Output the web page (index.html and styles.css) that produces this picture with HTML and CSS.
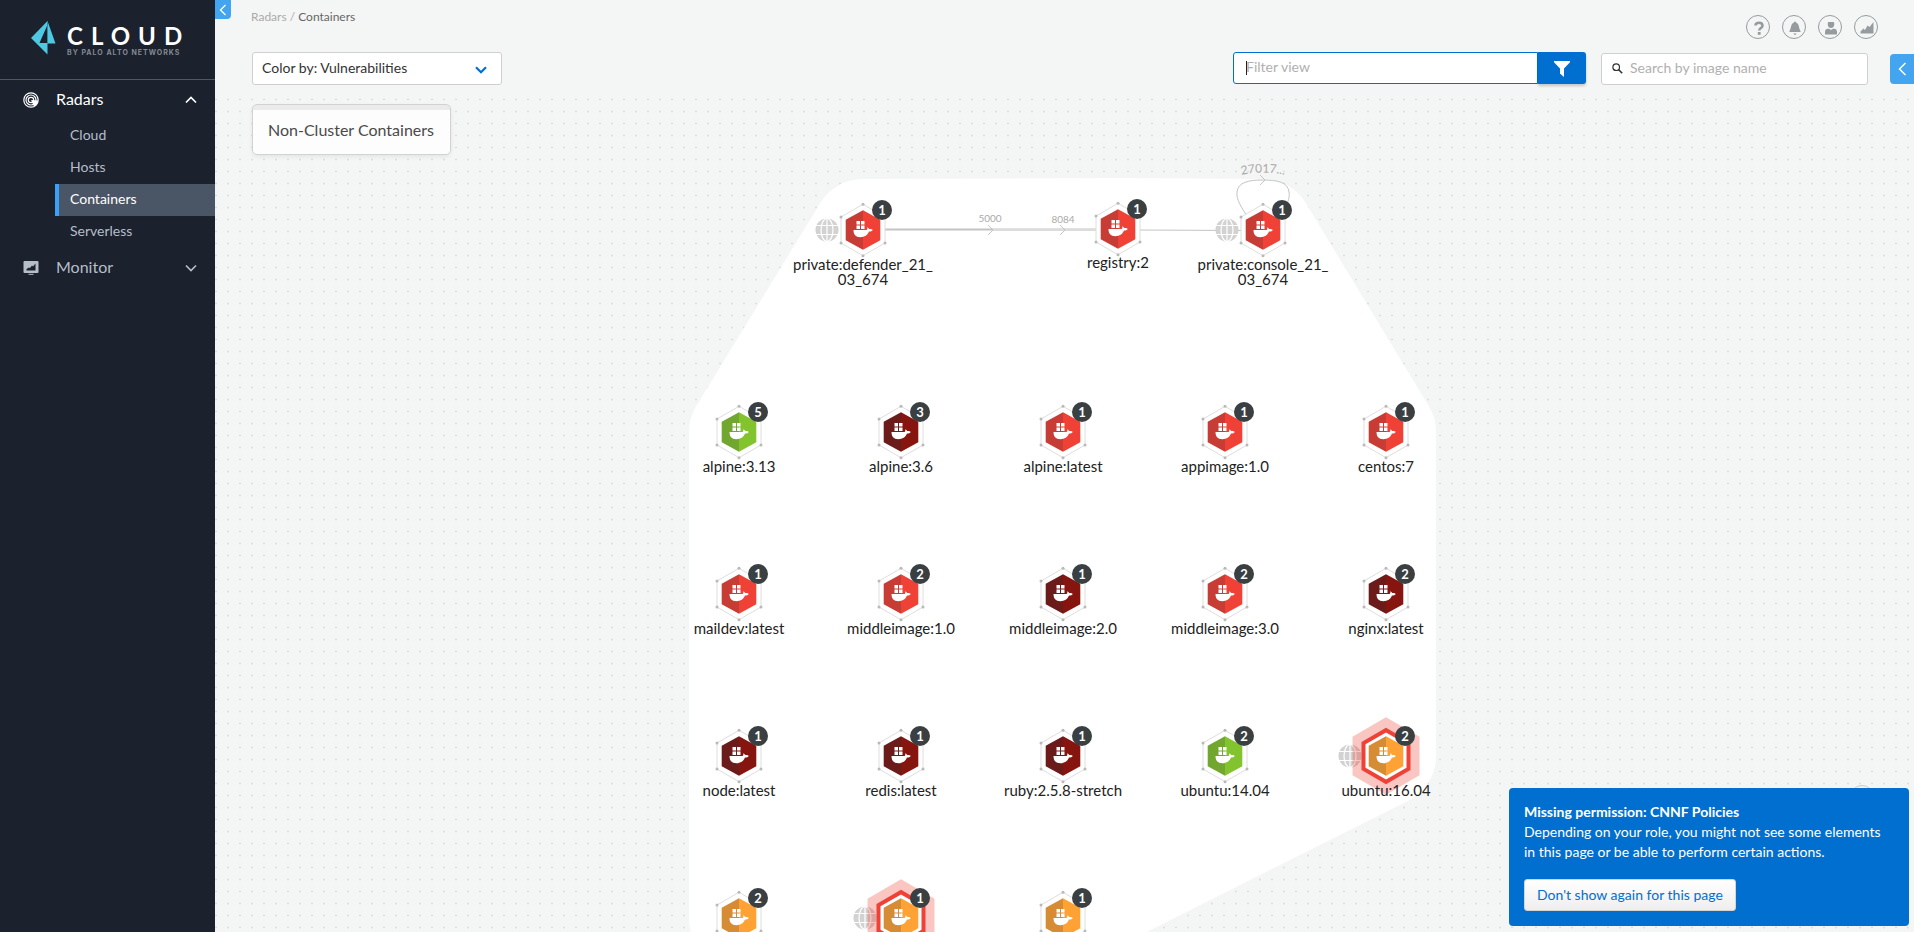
FILE: index.html
```html
<!DOCTYPE html>
<html lang="en">
<head>
<meta charset="utf-8">
<title>Radars / Containers</title>
<link rel="stylesheet" href="styles.css">
</head>
<body>
<div class="app">
  <aside class="sidebar">
    <div class="brand">
      <svg class="brand-mark" width="26" height="34" viewBox="0 0 26 34" aria-hidden="true">
        <path d="M16.500 0V33.500L0 17Z" fill="#4fc8e2"/>
        <path d="M16.500 0L24.500 22.500H8.500Z" fill="#4fc8e2"/>
        <path d="M16 5V22H8.500Z" fill="#1b212d"/>
        <path d="M16.500 0V22.500" stroke="#2e8ba3" stroke-width="1"/>
      </svg>
      <div class="brand-text">
        <span class="brand-name">CLOUD</span>
        <span class="brand-by">BY PALO ALTO NETWORKS</span>
      </div>
    </div>
    <nav class="nav">
      <button class="nav-group active" type="button" aria-expanded="true">
        <svg width="16" height="16" viewBox="0 0 16 16" fill="none" stroke="#fff" aria-hidden="true">
          <circle cx="8" cy="8" r="7.200" stroke-width="1.200"/>
          <circle cx="8" cy="8" r="5" stroke-width="1.200"/>
          <circle cx="8" cy="8" r="2.700" stroke-width="1.200"/>
          <path d="M8 8L15 8.500A7 7 0 0 1 11 14.500Z" fill="#fff" stroke="none"/>
        </svg>
        <span class="nav-label">Radars</span>
        <svg width="12" height="8" viewBox="0 0 12 8" fill="none" stroke="currentColor" stroke-width="1.700" aria-hidden="true"><path d="M1 6.500L6 1.500L11 6.500"/></svg>
      </button>
      <ul class="subnav">
        <li><a href="#cloud">Cloud</a></li>
        <li><a href="#hosts">Hosts</a></li>
        <li><a class="current" href="#containers" aria-current="page">Containers</a></li>
        <li><a href="#serverless">Serverless</a></li>
      </ul>
      <button class="nav-group" type="button" aria-expanded="false">
        <svg width="16" height="14" viewBox="0 0 16 14" aria-hidden="true">
          <path d="M1.500 0H14.500Q15.500 0 15.500 1V11Q15.500 12 14.500 12H1.500Q.5 12 .5 11V1Q.5 0 1.500 0Z" fill="#b5bec9"/>
          <path d="M3.500 9.500V8L6 6.500L7 7L9 4.500L10 5.500L12.500 2.500V9.500Z" fill="#1b212d"/>
          <path d="M5.500 13.300H10.500" stroke="#b5bec9" stroke-width="1"/>
        </svg>
        <span class="nav-label">Monitor</span>
        <svg width="12" height="8" viewBox="0 0 12 8" fill="none" stroke="currentColor" stroke-width="1.700" aria-hidden="true"><path d="M1 1.500L6 6.500L11 1.500"/></svg>
      </button>
    </nav>
  </aside>

  <main class="main">
    <svg class="radar" role="img" aria-label="Container radar">
      <defs>
        <pattern id="dots" width="12" height="12" patternUnits="userSpaceOnUse">
          <circle cx="1" cy="3.500" r="1" fill="#dcdedd"/>
        </pattern>
        <g id="globe">
          <circle r="11.500" fill="#d2d2d2"/>
          <g fill="none" stroke="#fff" stroke-width="1.200">
            <path d="M0 -12V12M-12 -4.500H12M-12 4.500H12"/>
            <ellipse rx="6" ry="11.500"/>
          </g>
        </g>
        <g id="hex">
          <path d="M0 -19.700L-17.300 -10.300V10.300L0 19.700Z" fill="var(--shade)"/>
          <path d="M0 -19.700L17.300 -10.300V10.300L0 19.700Z" fill="var(--tone)"/>
          <g fill="#fff">
            <path d="M-6.500 -9H-3V-5.500H-6.500ZM-2 -9H1.500V-5.500H-2ZM-6.500 -4.500H-3V-1H-6.500ZM-2 -4.500H1.500V-1H-2Z"/>
            <path d="M-9.500 0H3.600C4.300 -.5 4.500 -1.500 4.300 -2.800C5.500 -2.300 6 -1.300 6.300 -.9C7.500 -1.100 9 -.9 9.700 -.1C9 1.200 7.500 1.700 6 1.600C4.500 5.500 1.500 7.200 -2.500 7.200C-7.500 7.200 -9.500 4.500 -9.500 0Z"/>
          </g>
        </g>
        <g id="node">
          <path d="M0 -25.700L22 -13V13L0 25.700L-22 13V-13Z" fill="#fff" stroke="#dedede"/>
          <g fill="#b9b9b9">
            <circle cy="-25.700" r="1.500"/><circle cy="25.700" r="1.500"/>
            <circle cx="22" cy="-13" r="1.500"/><circle cx="22" cy="13" r="1.500"/>
            <circle cx="-22" cy="-13" r="1.500"/><circle cx="-22" cy="13" r="1.500"/>
          </g>
          <use href="#hex"/>
          <circle cx="19" cy="-20" r="10" fill="#3a3f42"/>
        </g>
        <g id="alert">
          <path d="M0 -38.700L33.500 -19.300V19.300L0 38.700L-33.500 19.300V-19.300Z" fill="#ef4136" fill-opacity=".3"/>
          <path d="M0 -28.300L24.500 -14V14L0 28.300L-24.500 14V-14Z" fill="#ef4136"/>
          <path d="M0 -23.500L20.500 -11.800V11.800L0 23.500L-20.500 11.800V-11.800Z" fill="#fff"/>
          <use href="#hex"/>
          <circle cx="19" cy="-20" r="10" fill="#3a3f42"/>
        </g>
      </defs>

      <rect y="96" width="100%" height="100%" fill="url(#dots)"/>
      <polygon class="hull" points="648,229 903,228 1048,229 1171,432 1171,756 848,918 524,918 524,432"/>

      <g class="edges">
        <path d="M666 229.500L886 229.500" stroke-width="2"/>
        <path d="M778 230H886" stroke="#dcdcdc" stroke-width="2"/>
        <path d="M920 230L1031 230.500"/>
        <path d="M1034 219C1026 207 1021 199 1022 192C1023 182 1034 180 1048 180C1062 180 1073 182 1074 192C1075 197 1073 202 1070 208"/>
        <path d="M773 225L778 230L773 235M845 225L850 230L845 235M1045 175L1050 180L1045 185"/>
      </g>
      <path id="loop-label" d="M1018 177Q1048 168 1078 177" fill="none"/>
      <text class="port" x="775" y="222">5000</text>
      <text class="port" x="848" y="223">8084</text>
      <text class="port loop"><textPath href="#loop-label" startOffset="50%">27017...</textPath></text>

      <g class="red" transform="translate(648 230)">
        <use href="#globe" x="-36"/><use href="#node"/><text class="count" x="19" y="-15">1</text>
        <text class="label" y="40">private:defender_21_</text><text class="label" y="55">03_674</text>
      </g>
      <g class="red" transform="translate(903 229)">
        <use href="#node"/><text class="count" x="19" y="-15">1</text><text class="label" y="39">registry:2</text>
      </g>
      <g class="red" transform="translate(1048 230)">
        <use href="#globe" x="-36"/><use href="#node"/><text class="count" x="19" y="-15">1</text>
        <text class="label" y="40">private:console_21_</text><text class="label" y="55">03_674</text>
      </g>

      <g class="green" transform="translate(524 432)"><use href="#node"/><text class="count" x="19" y="-15">5</text><text class="label" y="40">alpine:3.13</text></g>
      <g class="maroon" transform="translate(686 432)"><use href="#node"/><text class="count" x="19" y="-15">3</text><text class="label" y="40">alpine:3.6</text></g>
      <g class="red" transform="translate(848 432)"><use href="#node"/><text class="count" x="19" y="-15">1</text><text class="label" y="40">alpine:latest</text></g>
      <g class="red" transform="translate(1010 432)"><use href="#node"/><text class="count" x="19" y="-15">1</text><text class="label" y="40">appimage:1.0</text></g>
      <g class="red" transform="translate(1171 432)"><use href="#node"/><text class="count" x="19" y="-15">1</text><text class="label" y="40">centos:7</text></g>

      <g class="red" transform="translate(524 594)"><use href="#node"/><text class="count" x="19" y="-15">1</text><text class="label" y="40">maildev:latest</text></g>
      <g class="red" transform="translate(686 594)"><use href="#node"/><text class="count" x="19" y="-15">2</text><text class="label" y="40">middleimage:1.0</text></g>
      <g class="maroon" transform="translate(848 594)"><use href="#node"/><text class="count" x="19" y="-15">1</text><text class="label" y="40">middleimage:2.0</text></g>
      <g class="red" transform="translate(1010 594)"><use href="#node"/><text class="count" x="19" y="-15">2</text><text class="label" y="40">middleimage:3.0</text></g>
      <g class="maroon" transform="translate(1171 594)"><use href="#node"/><text class="count" x="19" y="-15">2</text><text class="label" y="40">nginx:latest</text></g>

      <g class="maroon" transform="translate(524 756)"><use href="#node"/><text class="count" x="19" y="-15">1</text><text class="label" y="40">node:latest</text></g>
      <g class="maroon" transform="translate(686 756)"><use href="#node"/><text class="count" x="19" y="-15">1</text><text class="label" y="40">redis:latest</text></g>
      <g class="maroon" transform="translate(848 756)"><use href="#node"/><text class="count" x="19" y="-15">1</text><text class="label" y="40">ruby:2.5.8-stretch</text></g>
      <g class="green" transform="translate(1010 756)"><use href="#node"/><text class="count" x="19" y="-15">2</text><text class="label" y="40">ubuntu:14.04</text></g>
      <g class="orange" transform="translate(1171 756)"><use href="#globe" x="-36"/><use href="#alert"/><text class="count" x="19" y="-15">2</text><text class="label" y="40">ubuntu:16.04</text></g>

      <g class="orange" transform="translate(524 918)"><use href="#node"/><text class="count" x="19" y="-15">2</text></g>
      <g class="orange" transform="translate(686 918)"><use href="#globe" x="-36"/><use href="#alert"/><text class="count" x="19" y="-15">1</text></g>
      <g class="orange" transform="translate(848 918)"><use href="#node"/><text class="count" x="19" y="-15">1</text></g>
    </svg>

    <button class="tab tab-left" type="button" aria-label="Collapse menu">
      <svg width="8" height="12" viewBox="0 0 8 12" fill="none" stroke="#fff" stroke-width="1.300"><path d="M6.500 1L1.500 6L6.500 11"/></svg>
    </button>

    <header class="top">
      <nav class="crumbs" aria-label="Breadcrumb"><a href="#radars">Radars</a> / <span>Containers</span></nav>
      <div class="tools">
        <button type="button" aria-label="Help"><svg width="24" height="24" viewBox="0 0 24 24"><path d="M8.500 9.500C8.500 5.800 15.500 5.800 15.500 9.700C15.500 12 12.200 12 12.200 14.500" fill="none" stroke="#969b9f" stroke-width="2.600"/><rect x="10.800" y="16" width="2.800" height="2.800" fill="#969b9f"/></svg></button>
        <button type="button" aria-label="Notifications"><svg width="24" height="24" viewBox="0 0 24 24" fill="#969b9f"><path d="M12 5.500C13 5.500 13.200 6.300 13.200 6.800C16.500 8 15.500 12 17.500 15V16H6.500V15C8.500 12 7.500 8 10.800 6.800C10.800 6.300 11 5.500 12 5.500ZM10.300 17.500H13.700L12 19.300Z"/></svg></button>
        <button type="button" aria-label="Account"><svg width="24" height="24" viewBox="0 0 24 24" fill="#969b9f"><path d="M9.500 6H14.500Q15.200 6 15.200 7V9Q14.800 12 12 12Q9.200 12 8.800 9V7Q8.800 6 9.500 6ZM6 18.500V15.500Q6.200 13 8.500 12.800L10 12.800L12 14L14 12.800L15.500 12.800Q17.800 13 18 15.500V18.500Z"/></svg></button>
        <button type="button" aria-label="Reports"><svg width="24" height="24" viewBox="0 0 24 24" fill="#969b9f"><path d="M5.500 17.500V15.500L8.500 12.500L10 14L12.500 9.500L14.500 11L18.500 6V17.500Z"/></svg></button>
      </div>
    </header>

    <div class="toolbar">
      <div class="picker">
        <select aria-label="Color by"><option>Color by: Vulnerabilities</option></select>
        <svg width="12" height="8" viewBox="0 0 12 8" fill="none" stroke="#006fcf" stroke-width="2.200" aria-hidden="true"><path d="M1 1.300L6 6.300L11 1.300"/></svg>
      </div>
      <form class="filter" role="search">
        <input type="text" placeholder="Filter view" aria-label="Filter view">
        <span class="caret"></span>
        <button type="submit" aria-label="Apply filter"><svg width="16" height="16" viewBox="0 0 16 16" fill="#fff"><path d="M0 0H16V1.200L10 7.500V16L6 12.500V7.500L0 1.200Z"/></svg></button>
      </form>
      <label class="search">
        <svg width="11" height="11" viewBox="0 0 11 11" fill="none" stroke="#333" aria-hidden="true"><circle cx="4.200" cy="4.200" r="3.300" stroke-width="1.200"/><path d="M6.600 6.600L10.200 10.200" stroke-width="1.500"/></svg>
        <input type="text" placeholder="Search by image name" aria-label="Search by image name">
      </label>
      <button class="tab tab-right" type="button" aria-label="Open panel">
        <svg width="9" height="14" viewBox="0 0 9 14" fill="none" stroke="#fff" stroke-width="1.500"><path d="M7.500 1L1.500 7L7.500 13"/></svg>
      </button>
    </div>

    <button class="cluster" type="button">Non-Cluster Containers</button>

    <span class="locator"></span>
    <section class="toast" role="alert">
      <strong>Missing permission: CNNF Policies</strong>
      <p>Depending on your role, you might not see some elements in this page or be able to perform certain actions.</p>
      <button type="button">Don't show again for this page</button>
    </section>
  </main>
</div>
</body>
</html>
```

FILE: styles.css
```css
* { box-sizing: border-box; }

body {
  margin: 0;
  font-family: Lato, "Open Sans", sans-serif;
  font-size: 15px;
  color: #333;
  background: #f4f6f5;
}

button, input, select { font: inherit; }
button { border: 0; padding: 0; cursor: pointer; }
a { color: inherit; text-decoration: none; }

.app {
  display: grid;
  grid-template-columns: 215px 1fr;
  height: 100vh;
  overflow: hidden;
}

/* Sidebar */
.sidebar { background: #1b212d; color: #b5bec9; }

.brand {
  display: flex;
  align-items: flex-start;
  gap: 10px;
  height: 80px;
  padding: 21px 24px 0 31px;
  border-bottom: 1px solid #4d5866;
}
.brand-text { display: flex; flex-direction: column; padding-top: 3px; }
.brand-name {
  font: 700 24px/24px Lato, sans-serif;
  letter-spacing: 8px;
  color: #fff;
}
.brand-by {
  font: 700 7px/10px Inter, sans-serif;
  letter-spacing: 1px;
  color: #858a92;
  white-space: nowrap;
}

.nav-group {
  display: flex;
  align-items: center;
  width: 100%;
  height: 40px;
  padding: 0 18px 0 23px;
  background: none;
  color: #b5bec9;
  font-size: 16px;
  text-align: left;
}
.nav-group.active { color: #fff; }
.nav-label { flex: 1; padding: 0 0 3px 17px; }

.subnav { margin: 0; padding: 0 0 0 55px; list-style: none; }
.subnav a {
  display: block;
  padding: 0 0 2px 11px;
  border-left: 4px solid transparent;
  font-size: 14px;
  line-height: 30px;
}
.subnav .current { color: #fff; background: #4a5666; border-color: #3ba0f7; }

/* Main area */
.main {
  position: relative;
  display: flex;
  flex-direction: column;
  align-items: stretch;
  min-width: 0;
}
.radar { position: absolute; inset: 0; width: 100%; height: 100%; }

.tab {
  display: grid;
  place-items: center;
  background: #43a5ef;
}
.tab-left {
  position: absolute;
  top: 0;
  left: 0;
  width: 16px;
  height: 19px;
  border-radius: 0 0 4px 0;
}
.tab-right {
  width: 24px;
  height: 30px;
  margin-left: 22px;
  border-radius: 4px 0 0 4px;
}

.top {
  position: relative;
  display: flex;
  justify-content: space-between;
  height: 52px;
  padding: 0 36px;
}
.crumbs { padding-top: 9px; font-size: 12px; line-height: 16px; color: #aaa; }
.crumbs span { color: #666; }
.tools { display: flex; gap: 12px; padding-top: 15px; }
.tools button {
  display: grid;
  place-items: center;
  width: 24px;
  height: 24px;
  border: 1px solid #969b9f;
  border-radius: 50%;
  background: none;
}

.toolbar { position: relative; display: flex; align-items: center; padding-left: 37px; }

.picker { display: grid; align-items: center; width: 250px; margin-right: auto; }
.picker > * { grid-area: 1 / 1; }
.picker select {
  appearance: none;
  height: 33px;
  padding: 0 9px 2px;
  border: 1px solid #cfcfcf;
  border-radius: 3px;
  background: #fff;
  color: #333;
  font-size: 14px;
}
.picker svg { justify-self: end; margin: 3px 15px 0 0; pointer-events: none; }

.filter { position: relative; display: flex; width: 353px; height: 33px; padding-bottom: 1px; }
.filter input {
  flex: 1;
  min-width: 0;
  padding: 0 12px 3px;
  border: 1px solid #006fcf;
  border-radius: 3px 0 0 3px;
  outline: 0;
  background: #fff;
  font-size: 14px;
}
.filter button {
  width: 48px;
  padding-bottom: 2px;
  border-radius: 0 3px 3px 0;
  background: #006fcf;
  box-shadow: 0 2px 3px #0003;
}
.filter button svg { vertical-align: middle; }
.caret { position: absolute; top: 9px; left: 13px; width: 1px; height: 14px; background: #222; }

.search {
  display: flex;
  align-items: center;
  gap: 7px;
  width: 267px;
  height: 32px;
  margin-left: 15px;
  padding: 0 10px;
  border: 1px solid #cfcfcf;
  border-radius: 3px;
  background: #fff;
}
.search input { flex: 1; min-width: 0; padding: 0 0 3px; border: 0; outline: 0; background: none; font-size: 14px; }
::placeholder { color: #b0b0b0; }

.cluster {
  position: relative;
  align-self: flex-start;
  margin: 19px 0 0 37px;
  padding: 13px 16px 12px 15px;
  border: 1px solid #d2d2d2;
  border-radius: 5px;
  background: linear-gradient(#ebebeb 5px, #fdfdfd 5px);
  box-shadow: 0 2px 4px #0001;
  color: #4a4a4a;
  font-size: 16px;
  line-height: 24px;
}

/* Radar canvas */
.hull { fill: #fff; stroke: #fff; stroke-width: 100px; stroke-linejoin: round; }
.edges { fill: none; stroke: #c4c4c4; }
.red { --tone: #ef4136; --shade: #c83c36; }
.green { --tone: #82c32e; --shade: #72a72f; }
.maroon { --tone: #86140f; --shade: #6b1c1a; }
.orange { --tone: #ffa236; --shade: #d68c35; }
.radar text { text-anchor: middle; }
.label { font-size: 15px; fill: #222; }
.count { font-size: 13px; font-weight: 700; fill: #fff; }
.port { font-size: 10px; fill: #aaa; }
.loop { font-size: 12px; }

/* Notification */
.locator {
  position: absolute;
  right: 40px;
  bottom: 123px;
  width: 24px;
  height: 24px;
  border: 1px solid #c8c8c8;
  border-radius: 50%;
}
.toast {
  position: absolute;
  right: 5px;
  bottom: 6px;
  width: 400px;
  padding: 14px 15px 15px;
  border-radius: 4px;
  background: #006fcf;
  color: #fff;
  font-size: 14px;
  line-height: 20px;
}
.toast strong { display: block; }
.toast p { margin: 0 0 17px; }
.toast button {
  height: 32px;
  padding: 0 12px;
  border: 1px solid #d5d5d5;
  border-radius: 3px;
  background: linear-gradient(#fff, #eee);
  color: #006fcf;
  font-size: 14px;
}
```
